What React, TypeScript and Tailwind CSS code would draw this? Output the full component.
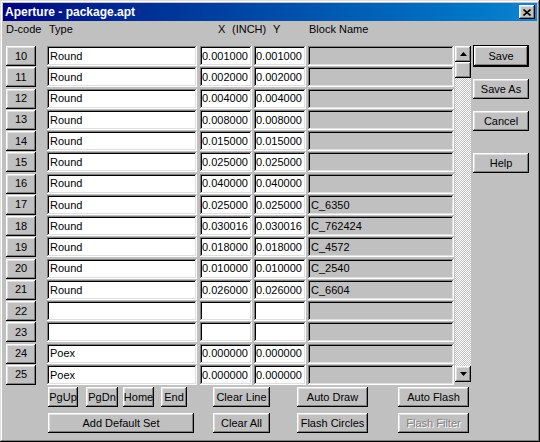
const raised =
  "bg-[#c0c0c0] shadow-[inset_-1px_-1px_#000,inset_1px_1px_#fff,inset_-2px_-2px_#808080,inset_2px_2px_#dfdfdf]";
const sunken =
  "shadow-[inset_-1px_-1px_#fff,inset_1px_1px_#808080,inset_-2px_-2px_#dfdfdf,inset_2px_2px_#000]";

interface Aperture {
  code: number;
  type: string;
  x: string;
  y: string;
  block: string;
}

const rows: Aperture[] = [
  { code: 10, type: "Round", x: "0.001000", y: "0.001000", block: "" },
  { code: 11, type: "Round", x: "0.002000", y: "0.002000", block: "" },
  { code: 12, type: "Round", x: "0.004000", y: "0.004000", block: "" },
  { code: 13, type: "Round", x: "0.008000", y: "0.008000", block: "" },
  { code: 14, type: "Round", x: "0.015000", y: "0.015000", block: "" },
  { code: 15, type: "Round", x: "0.025000", y: "0.025000", block: "" },
  { code: 16, type: "Round", x: "0.040000", y: "0.040000", block: "" },
  { code: 17, type: "Round", x: "0.025000", y: "0.025000", block: "C_6350" },
  { code: 18, type: "Round", x: "0.030016", y: "0.030016", block: "C_762424" },
  { code: 19, type: "Round", x: "0.018000", y: "0.018000", block: "C_4572" },
  { code: 20, type: "Round", x: "0.010000", y: "0.010000", block: "C_2540" },
  { code: 21, type: "Round", x: "0.026000", y: "0.026000", block: "C_6604" },
  { code: 22, type: "", x: "", y: "", block: "" },
  { code: 23, type: "", x: "", y: "", block: "" },
  { code: 24, type: "Poex", x: "0.000000", y: "0.000000", block: "" },
  { code: 25, type: "Poex", x: "0.000000", y: "0.000000", block: "" },
];

const Btn = ({
  label,
  className = "",
  disabled = false,
}: {
  label: string;
  className?: string;
  disabled?: boolean;
}) => (
  <button
    className={`${raised} h-[20px] flex items-center justify-center leading-none ${
      disabled ? "text-[#808080] [text-shadow:1px_1px_0_#fff]" : "text-black"
    } ${className}`}
  >
    {label}
  </button>
);

const Row = ({ r }: { r: Aperture }) => (
  <div className="flex h-[21.27px] items-start">
    <Btn label={String(r.code)} className="w-[30px]" />
    <div className={`ml-[11px] w-[150px] h-[20px] bg-white ${sunken} pl-[3px] flex items-center`}>
      {r.type}
    </div>
    <div className={`ml-[3px] w-[52px] h-[20px] bg-white ${sunken} pl-[2px] flex items-center`}>
      {r.x}
    </div>
    <div className={`ml-[2px] w-[52px] h-[20px] bg-white ${sunken} pl-[2px] flex items-center`}>
      {r.y}
    </div>
    <div className={`ml-[2px] w-[146px] h-[20px] bg-[#c0c0c0] ${sunken} pl-[3px] flex items-center`}>
      {r.block}
    </div>
  </div>
);

const Arrow = ({ up }: { up: boolean }) => (
  <div className={`${raised} w-[16px] h-[16px] flex items-center justify-center`}>
    <svg width="7" height="4" viewBox="0 0 7 4">
      {up ? (
        <polygon points="3.5,0 7,4 0,4" fill="#000" />
      ) : (
        <polygon points="0,0 7,0 3.5,4" fill="#000" />
      )}
    </svg>
  </div>
);

const Scrollbar = () => (
  <div className="ml-[1px] w-[16px] h-[336px] flex flex-col bg-[repeating-conic-gradient(#fff_0%_25%,#c0c0c0_0%_50%)] bg-[length:2px_2px]">
    <Arrow up />
    <div className={`${raised} w-[16px] h-[16px]`} />
    <div className="flex-1" />
    <Arrow up={false} />
  </div>
);

export default function App() {
  return (
    <div className="w-[540px] h-[442px] bg-[#c0c0c0] p-[3px] shadow-[inset_-1px_-1px_#000,inset_1px_1px_#dfdfdf,inset_-2px_-2px_#808080,inset_2px_2px_#fff] font-['Liberation_Sans',Arial,sans-serif] text-[11px] text-black overflow-hidden">
      {/* barra de titulo */}
      <div className="h-[18px] bg-linear-to-r from-[#000080] to-[#1084d0] flex items-center justify-between pl-[2px] pr-[2px]">
        <span className="text-white font-bold text-[12px] leading-none">Aperture - package.apt</span>
        <button className={`${raised} w-[16px] h-[14px] flex items-center justify-center`}>
          <svg width="8" height="7" viewBox="0 0 8 7">
            <path d="M0.5 0.5 L7.5 6.5 M7.5 0.5 L0.5 6.5" stroke="#000" strokeWidth="1.6" />
          </svg>
        </button>
      </div>

      <div className="flex pl-[3px]">
        <div className="w-[465px]">
          <div className="h-[16px] flex items-center">
            <span className="w-[43px]">D-code</span>
            <span className="w-[169px]">Type</span>
            <span className="w-[14px]">X</span>
            <span className="w-[41px]">(INCH)</span>
            <span className="w-[36px]">Y</span>
            <span>Block Name</span>
          </div>

          <div className="mt-[9px] flex items-start">
            <div className="w-[448px]">
              {rows.map((r) => (
                <Row key={r.code} r={r} />
              ))}
            </div>
            <Scrollbar />
          </div>

          <div className="mt-[1px] flex">
            <Btn label="PgUp" className="ml-[42px] w-[30px]" />
            <Btn label="PgDn" className="ml-[8px] w-[32px]" />
            <Btn label="Home" className="ml-[5px] w-[31px]" />
            <Btn label="End" className="ml-[7px] w-[26px]" />
            <Btn label="Clear Line" className="ml-[26px] w-[57px]" />
            <Btn label="Auto Draw" className="ml-[27px] w-[71px]" />
            <Btn label="Auto Flash" className="ml-[30px] w-[71px]" />
          </div>
          <div className="mt-[6px] flex">
            <Btn label="Add Default Set" className="ml-[42px] w-[146px]" />
            <Btn label="Clear All" className="ml-[19px] w-[57px]" />
            <Btn label="Flash Circles" className="ml-[27px] w-[71px]" />
            <Btn label="Flash Filter" className="ml-[30px] w-[71px]" disabled />
          </div>
        </div>

        <div className="ml-[2px] w-[56px] pt-[24px] flex flex-col">
          <div className="border border-black">
            <Btn label="Save" className="w-full h-[18px]" />
          </div>
          <Btn label="Save As" className="mt-[12px] w-[56px]" />
          <Btn label="Cancel" className="mt-[12px] w-[56px]" />
          <Btn label="Help" className="mt-[22px] w-[56px]" />
        </div>
      </div>
    </div>
  );
}
